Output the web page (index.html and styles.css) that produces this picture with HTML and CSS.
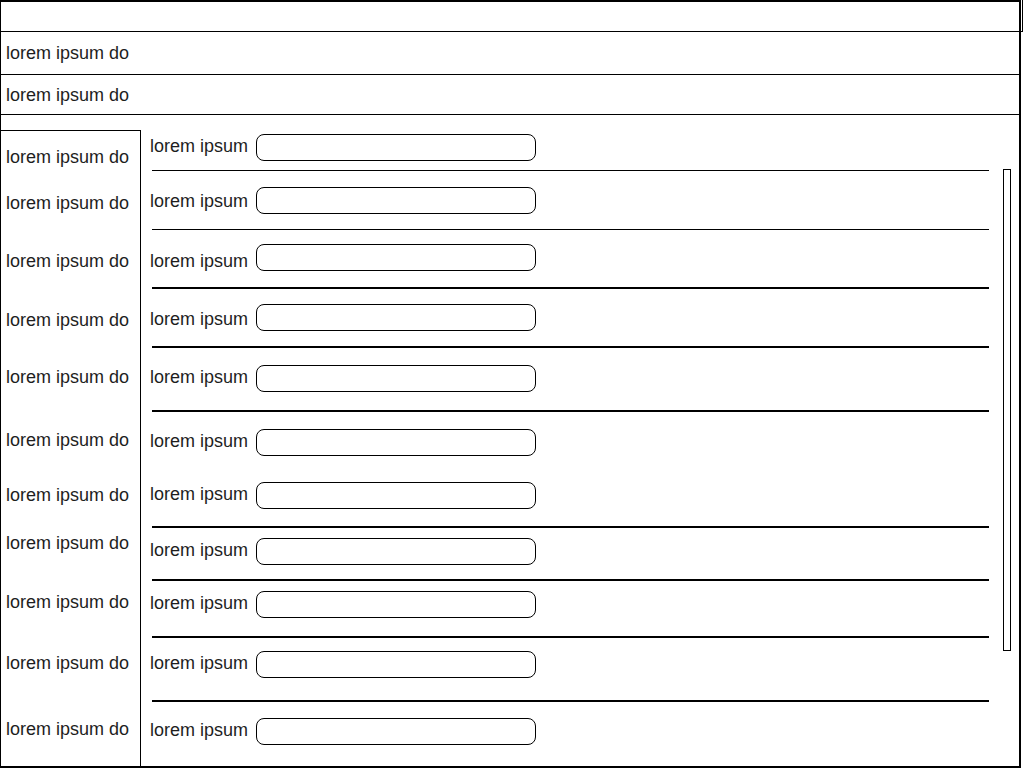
FILE: index.html
```html
<!DOCTYPE html>
<html lang="en">
<head>
<meta charset="utf-8">
<title>Form wireframe</title>
<link rel="stylesheet" href="styles.css">
</head>
<body>
<div class="frame">
  <div class="topbar"></div>
  <div class="row row-1">lorem ipsum do</div>
  <div class="row row-2">lorem ipsum do</div>
  <div class="main">
    <ul class="sidebar">
      <li>lorem ipsum do</li>
      <li>lorem ipsum do</li>
      <li>lorem ipsum do</li>
      <li>lorem ipsum do</li>
      <li>lorem ipsum do</li>
      <li>lorem ipsum do</li>
      <li>lorem ipsum do</li>
      <li>lorem ipsum do</li>
      <li>lorem ipsum do</li>
      <li>lorem ipsum do</li>
      <li>lorem ipsum do</li>
    </ul>
    <div class="content">
      <div class="fields">
        <div class="field"><label class="field-label">lorem ipsum</label><input class="field-input" type="text"></div>
        <div class="sep sep-thin"></div>
        <div class="field"><label class="field-label">lorem ipsum</label><input class="field-input" type="text"></div>
        <div class="sep sep-thin"></div>
        <div class="field"><label class="field-label">lorem ipsum</label><input class="field-input" type="text"></div>
        <div class="sep"></div>
        <div class="field"><label class="field-label">lorem ipsum</label><input class="field-input" type="text"></div>
        <div class="sep"></div>
        <div class="field"><label class="field-label">lorem ipsum</label><input class="field-input" type="text"></div>
        <div class="sep"></div>
        <div class="field"><label class="field-label">lorem ipsum</label><input class="field-input" type="text"></div>
        <div class="field"><label class="field-label">lorem ipsum</label><input class="field-input" type="text"></div>
        <div class="sep"></div>
        <div class="field"><label class="field-label">lorem ipsum</label><input class="field-input" type="text"></div>
        <div class="sep"></div>
        <div class="field"><label class="field-label">lorem ipsum</label><input class="field-input" type="text"></div>
        <div class="sep"></div>
        <div class="field"><label class="field-label">lorem ipsum</label><input class="field-input" type="text"></div>
        <div class="sep"></div>
        <div class="field"><label class="field-label">lorem ipsum</label><input class="field-input" type="text"></div>
      </div>
      <div class="scrollbar"></div>
    </div>
  </div>
</div>
</body>
</html>
```

FILE: styles.css
```css
* {
  box-sizing: border-box;
}

html,
body {
  margin: 0;
  padding: 0;
}

body {
  width: 1024px;
  height: 768px;
  overflow: hidden;
  background: #fff;
  color: #1e1e1e;
  font-family: "Liberation Sans", Arial, sans-serif;
  font-size: 18px;
  line-height: 20px;
}

.frame {
  width: 1021px;
  height: 768px;
  border: 2px solid #000;
  border-left-width: 1px;
  display: flex;
  flex-direction: column;
}

.topbar {
  flex: none;
  height: 32px;
  margin-top: -2px;
  margin-right: -4px;
  border-right: 1px solid #000;
  border-bottom: 1px solid #000;
}

.row {
  flex: none;
  padding-left: 5px;
  border-bottom: 1px solid #000;
  white-space: nowrap;
}

.row-1 {
  height: 43px;
  padding-top: 11px;
}

.row-2 {
  height: 40px;
  padding-top: 10px;
}

.main {
  flex: 1;
  min-height: 0;
  display: flex;
  margin-top: 15px;
}

.sidebar {
  flex: none;
  width: 140px;
  margin: 0;
  padding: 0 0 0 5px;
  list-style: none;
  border-top: 1px solid #000;
  border-right: 1px solid #000;
}

.sidebar li {
  white-space: nowrap;
}

.sidebar li:nth-child(1) { margin-top: 16px; }
.sidebar li:nth-child(2) { margin-top: 26px; }
.sidebar li:nth-child(3) { margin-top: 38px; }
.sidebar li:nth-child(4) { margin-top: 39px; }
.sidebar li:nth-child(5) { margin-top: 37px; }
.sidebar li:nth-child(6) { margin-top: 43px; }
.sidebar li:nth-child(7) { margin-top: 35px; }
.sidebar li:nth-child(8) { margin-top: 28px; }
.sidebar li:nth-child(9) { margin-top: 39px; }
.sidebar li:nth-child(10) { margin-top: 41px; }
.sidebar li:nth-child(11) { margin-top: 46px; }

.content {
  flex: 1;
  display: flex;
}

.fields {
  flex: 1;
  display: flex;
  flex-direction: column;
  padding-left: 9px;
}

.field {
  flex: none;
  display: flex;
  align-items: center;
  height: 27px;
}

.field-label {
  margin-right: 8px;
  margin-bottom: 4px;
  white-space: nowrap;
}

.field-input {
  -webkit-appearance: none;
  appearance: none;
  width: 280px;
  height: 27px;
  margin: 0;
  padding: 0 8px;
  border: 1px solid #000;
  border-radius: 8px;
  background: #fff;
  font: inherit;
  outline: none;
}

.sep {
  flex: none;
  width: 837px;
  height: 2px;
  margin-left: 2px;
  background: #000;
}

.sep-thin {
  height: 1px;
}

.fields > :nth-child(1) { margin-top: 4px; }
.fields > :nth-child(2) { margin-top: 9px; }
.fields > :nth-child(3) { margin-top: 16px; }
.fields > :nth-child(4) { margin-top: 15px; }
.fields > :nth-child(5) { margin-top: 14px; }
.fields > :nth-child(6) { margin-top: 16px; }
.fields > :nth-child(7) { margin-top: 15px; }
.fields > :nth-child(8) { margin-top: 15px; }
.fields > :nth-child(9) { margin-top: 17px; }
.fields > :nth-child(10) { margin-top: 18px; }
.fields > :nth-child(11) { margin-top: 17px; }
.fields > :nth-child(12) { margin-top: 26px; }
.fields > :nth-child(13) { margin-top: 17px; }
.fields > :nth-child(14) { margin-top: 10px; }
.fields > :nth-child(15) { margin-top: 14px; }
.fields > :nth-child(16) { margin-top: 10px; }
.fields > :nth-child(17) { margin-top: 18px; }
.fields > :nth-child(18) { margin-top: 13px; }
.fields > :nth-child(19) { margin-top: 22px; }
.fields > :nth-child(20) { margin-top: 16px; }

.fields > :nth-child(3) .field-label { margin-bottom: 0; }
.fields > :nth-child(5) .field-label { margin-top: 6px; margin-bottom: 0; }
.fields > :nth-child(7) .field-label { margin-top: 2px; margin-bottom: 0; }

.scrollbar {
  flex: none;
  width: 8px;
  height: 482px;
  margin-top: 39px;
  margin-right: 8px;
  border: 1px solid #000;
}
```
